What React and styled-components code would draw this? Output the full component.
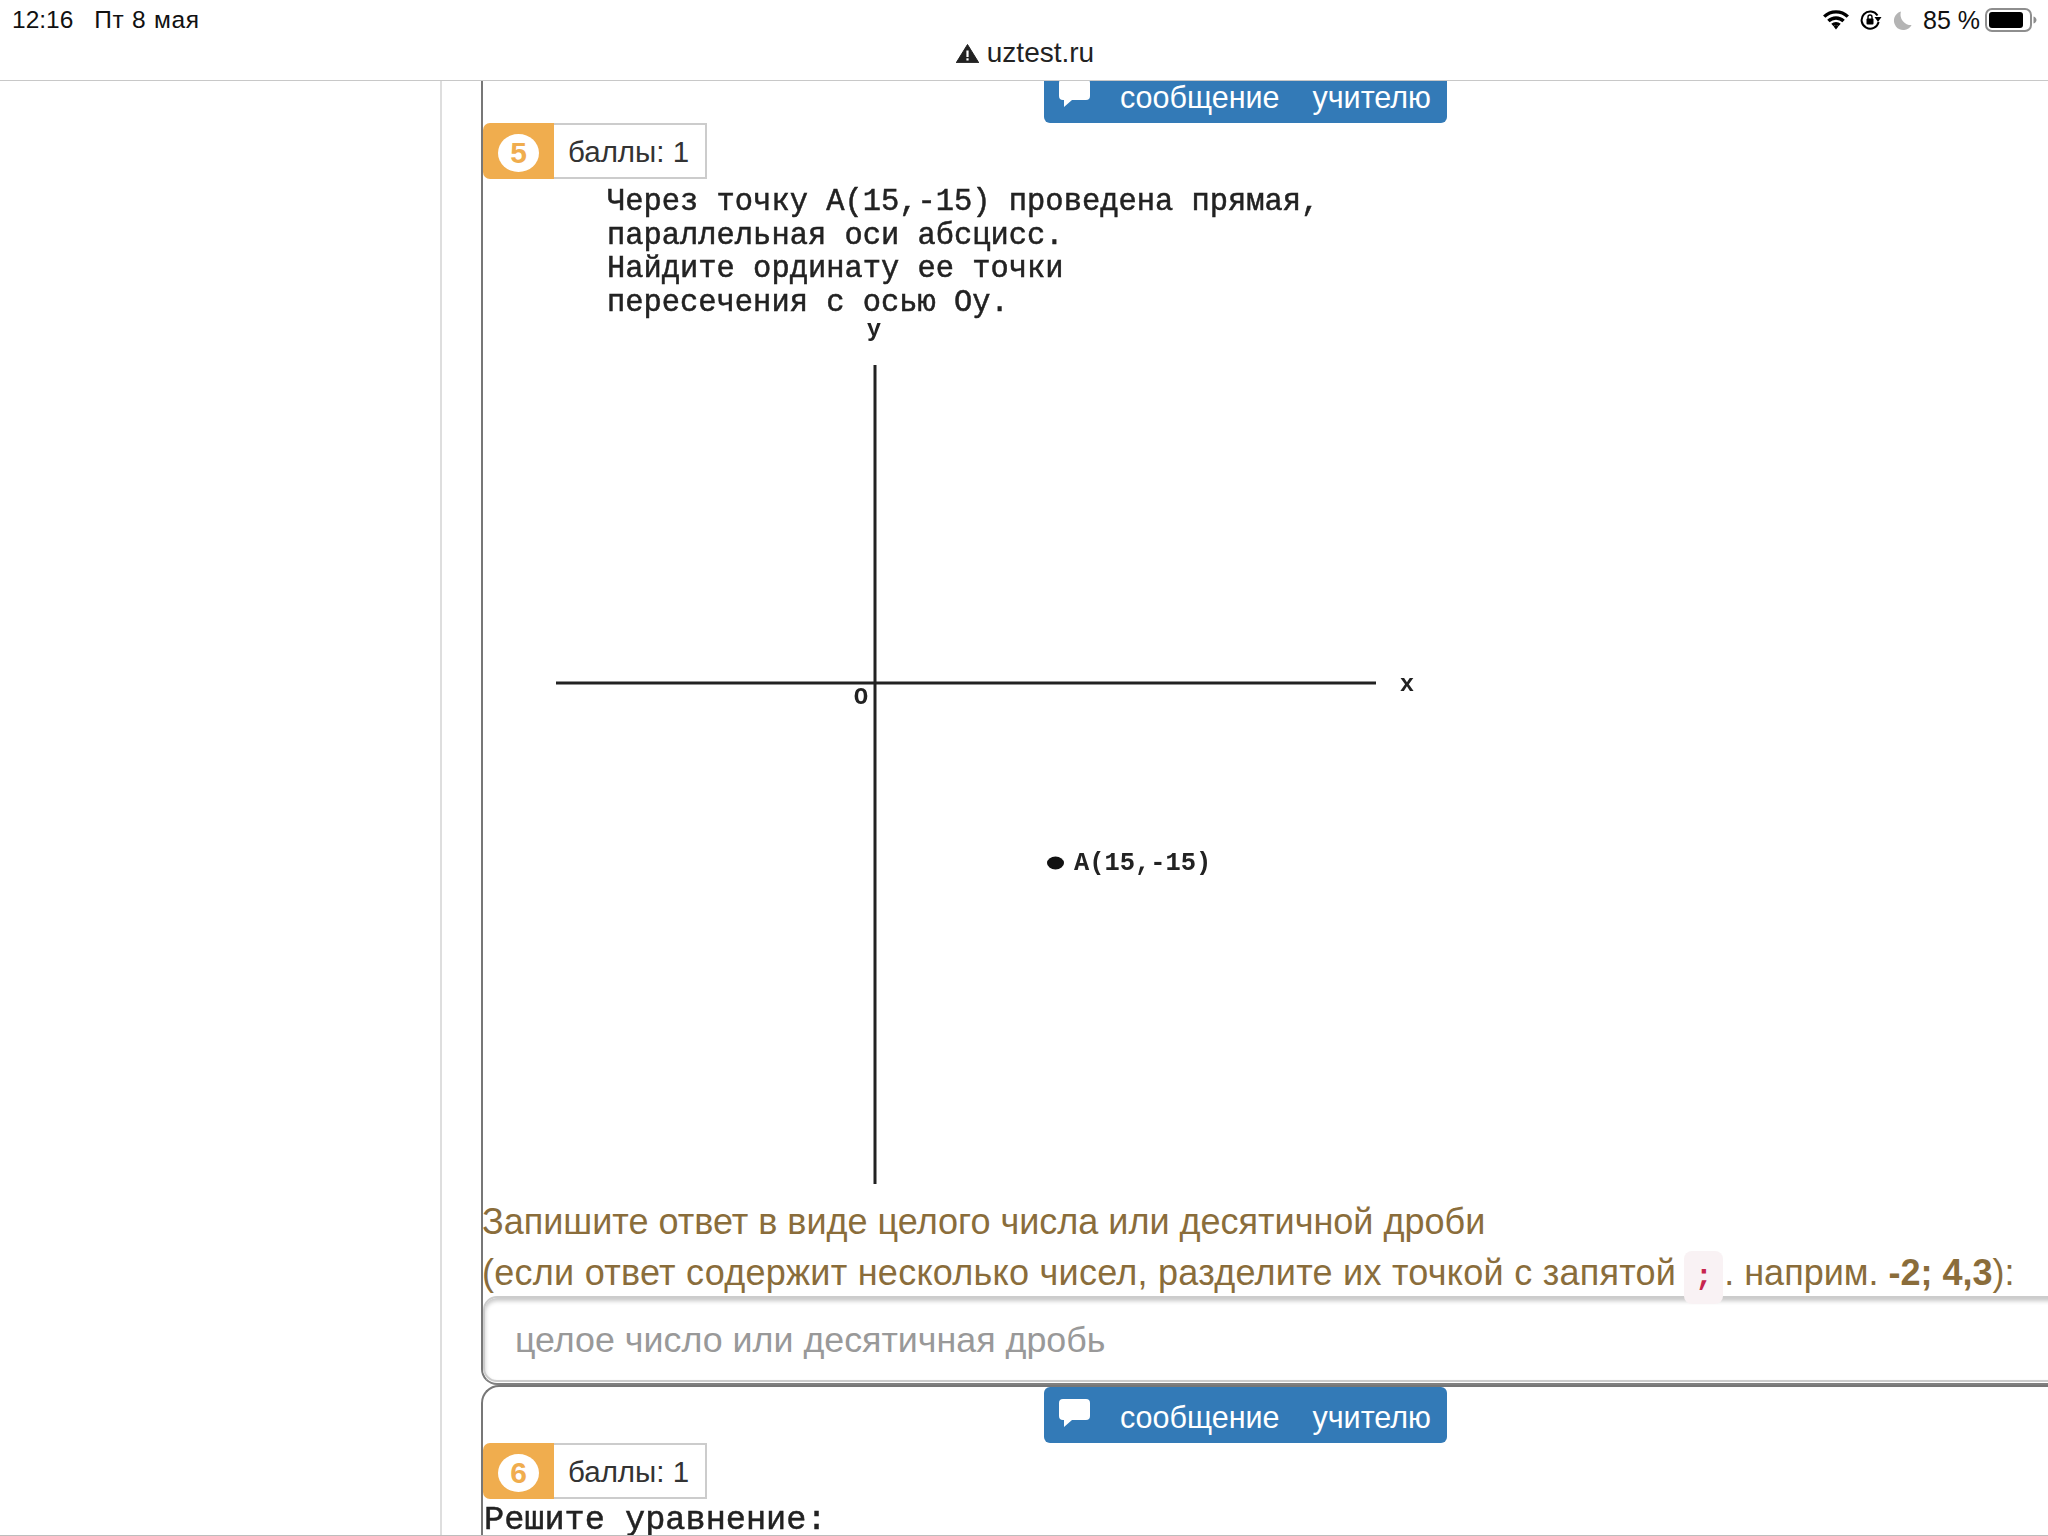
import React from 'react'
import styled, { createGlobalStyle } from 'styled-components'

const GlobalStyle = createGlobalStyle`
  html, body {
    margin: 0;
    padding: 0;
    background: #fff;
  }
  body {
    font-family: "Liberation Sans", Arial, sans-serif;
  }
`

const Page = styled.div`
  width: 2048px;
  height: 1536px;
  display: flex;
  flex-direction: column;
  overflow: hidden;
  box-sizing: border-box;
  border-bottom: 1px solid #bdbdbd;
`

const TopBar = styled.header`
  position: relative;
  z-index: 2;
  flex: none;
  height: 81px;
  box-sizing: border-box;
  background: #fff;
  border-bottom: 1px solid #c8c8c8;
  display: flex;
  flex-direction: column;
  color: #111;
`

const StatusRow = styled.div`
  height: 40px;
  padding: 0 11px 0 12px;
  display: flex;
  align-items: center;
  justify-content: space-between;
  font-size: 24.5px;
`

const StatusLeft = styled.div`
  display: flex;
  gap: 21px;
`

const DateText = styled.span`
  letter-spacing: 0.7px;
`

const StatusRight = styled.div`
  display: flex;
  align-items: center;
`

const Percent = styled.span`
  margin: 0 5px 0 11px;
  font-size: 25px;
`

const AddressRow = styled.div`
  height: 26px;
  display: flex;
  align-items: center;
  justify-content: center;
  gap: 8px;
  padding-left: 2px;
  font-size: 28px;
  color: #222;
`

const Main = styled.div`
  flex: 1;
  min-height: 0;
  display: flex;
`

const SideColumn = styled.aside`
  flex: none;
  width: 442px;
  box-sizing: border-box;
  border-right: 2px solid #dedede;
`

const Content = styled.main`
  flex: none;
  width: 1640px;
  margin-left: 39px;
`

const Card = styled.section`
  box-sizing: border-box;
  width: 100%;
  border-left: 2px solid #777;
  ${p => p.$first
    ? `margin-top: -14px;
       height: 1318px;
       border-bottom: 2px solid #808080;
       border-bottom-left-radius: 16px;`
    : `margin-top: 0;
       height: 150px;
       border-top: 2px solid #777;
       border-top-left-radius: 18px;`}
`

const MessageButton = styled.button`
  display: flex;
  align-items: center;
  width: 403px;
  height: 56px;
  margin: 0 0 0 561px;
  padding: 4px 0 0 15px;
  border: 0;
  border-radius: 6px;
  background: #337ab7;
  color: #fff;
  font: 30.5px "Liberation Sans", Arial, sans-serif;
  word-spacing: 2.5px;
  white-space: pre;
`

const BubbleIcon = styled.svg`
  width: 31px;
  height: 28px;
  margin: -8px 30px 0 0;
  fill: #fff;
`

const ScoreRow = styled.div`
  display: flex;
  height: 56px;
  width: 224px;
`

const ScoreNumber = styled.div`
  flex: none;
  width: 71px;
  display: flex;
  align-items: center;
  justify-content: center;
  background: #f0ad4e;
  border-radius: 7px 0 0 7px;
`

const ScoreCircle = styled.span`
  width: 41px;
  height: 38px;
  margin-top: 3px;
  border-radius: 50%;
  background: #fff;
  color: #f0ad4e;
  font-size: 30px;
  font-weight: 700;
  line-height: 38px;
  text-align: center;
`

const ScoreLabel = styled.div`
  flex: 1;
  box-sizing: border-box;
  border: 2px solid #ccc;
  border-left: 0;
  padding-left: 14px;
  font-size: 29.5px;
  line-height: 53px;
  color: #333;
`

const QuestionText = styled.pre`
  margin: 7px 0 0 124px;
  font: 30.45px/33.5px "Liberation Mono", "Courier New", monospace;
  color: #222;
  filter: blur(0.5px);
  -webkit-text-stroke: 0.5px #222;
`

const Graph = styled.svg`
  display: block;
  width: 1000px;
  height: 880px;
  margin-top: -3px;
  filter: blur(0.35px);
`

const GraphText = styled.text`
  font-family: "Liberation Mono", "Courier New", monospace;
  font-size: ${p => p.$size || 24}px;
  font-weight: ${p => (p.$bold ? 700 : 400)};
  fill: #222;
  text-anchor: ${p => p.$anchor || 'middle'};
`

const AnswerHint = styled.div`
  font-size: 36px;
  line-height: 51px;
  color: #8a6d3b;
  white-space: nowrap;
  margin: -1px 0 0 -1px;
`

const WideText = styled.span`
  letter-spacing: 0.26px;
`

const HintCode = styled.code`
  position: relative;
  z-index: 1;
  margin: 0 1px 0 8px;
  padding: 9px 10.5px 10px;
  font: 700 30px "Liberation Mono", monospace;
  color: #c7254e;
  background: #f9f2f4;
  border-radius: 8px;
`

const AnswerInput = styled.input`
  display: block;
  box-sizing: border-box;
  width: 1640px;
  height: 86px;
  margin-top: -2px;
  padding: 2px 30px 0;
  border: 2px solid #ccc;
  border-radius: 14px;
  outline: 0;
  background: #fff;
  box-shadow: inset 0 3px 4px rgba(0, 0, 0, 0.22);
  font: 35.8px "Liberation Sans", Arial, sans-serif;
  &::placeholder {
    color: #999;
    opacity: 1;
  }
`

const NextQuestion = styled.pre`
  margin: 6px 0 0 1px;
  font: 33.6px/30px "Liberation Mono", "Courier New", monospace;
  color: #222;
  filter: blur(0.5px);
  -webkit-text-stroke: 0.5px #222;
`

const Bubble = () => (
  <BubbleIcon viewBox="0 0 31 28">
    <path d="M4 0h23a4 4 0 0 1 4 4v13a4 4 0 0 1-4 4H13l-8 7v-7H4a4 4 0 0 1-4-4V4a4 4 0 0 1 4-4z" />
  </BubbleIcon>
)

const Message = () => (
  <MessageButton type="button">
    <Bubble />
    сообщение   учителю
  </MessageButton>
)

const Score = ({ n }) => (
  <ScoreRow>
    <ScoreNumber><ScoreCircle>{n}</ScoreCircle></ScoreNumber>
    <ScoreLabel>баллы: 1</ScoreLabel>
  </ScoreRow>
)

const WifiIcon = () => (
  <svg width="26" height="20" viewBox="0 0 26 20" fill="none" stroke="#000" strokeWidth="3.4">
    <path d="M1.2 6.600a17 17 0 0 1 23.600 0" />
    <path d="M5.400 11a11 11 0 0 1 15.200 0" />
    <path d="M9.400 15a5.400 5.400 0 0 1 7.200 0" />
    <path d="M10.600 16.400L13 19.600l2.400-3.200-2.400-1.600z" fill="#000" stroke="none" />
  </svg>
)

const RotationIcon = () => (
  <svg width="22" height="20" viewBox="0 0 22 20" fill="none" style={{ marginLeft: 11 }}>
    <path d="M17.500 5.500A8.600 8.600 0 1 0 18.600 12" stroke="#000" strokeWidth="2" />
    <path d="M14.500 7h7l-3.500 5z" fill="#000" />
    <rect x="6.500" y="8.500" width="7" height="6" rx="1" fill="#000" />
    <path d="M8 9V7a2 2 0 0 1 4 0v2" stroke="#000" strokeWidth="1.400" />
  </svg>
)

const MoonIcon = () => (
  <svg width="19" height="19" viewBox="0 0 19 19" style={{ marginLeft: 11 }}>
    <path d="M8 0.500a9.400 9.400 0 1 0 10.600 13.600A10.500 10.500 0 0 1 8 0.500z" fill="#b4b4b4" />
  </svg>
)

const BatteryIcon = () => (
  <svg width="52" height="24" viewBox="0 0 52 24">
    <rect x="1" y="1" width="45" height="22" rx="6" fill="none" stroke="#8e8e8e" strokeWidth="2" />
    <rect x="4" y="4" width="34" height="16" rx="3" fill="#000" />
    <path d="M48.500 8.500c2 .6 3 2 3 3.500s-1 2.900-3 3.500z" fill="#8e8e8e" />
  </svg>
)

const WarningIcon = () => (
  <svg width="23" height="19" viewBox="0 0 23 19">
    <path d="M11.500 0.500L22.800 18.800H0.200z" fill="#222" stroke="#222" strokeLinejoin="round" />
    <rect x="10.400" y="6.500" width="2.200" height="6.500" fill="#fff" />
    <rect x="10.400" y="14.300" width="2.200" height="2.200" fill="#fff" />
  </svg>
)

export default function App() {
  return (
    <>
      <GlobalStyle />
      <Page>
        <TopBar>
          <StatusRow>
            <StatusLeft>
              <span>12:16</span>
              <DateText>Пт 8 мая</DateText>
            </StatusLeft>
            <StatusRight>
              <WifiIcon />
              <RotationIcon />
              <MoonIcon />
              <Percent>85 %</Percent>
              <BatteryIcon />
            </StatusRight>
          </StatusRow>
          <AddressRow>
            <WarningIcon />
            <span>uztest.ru</span>
          </AddressRow>
        </TopBar>
        <Main>
          <SideColumn />
          <Content>
            <Card $first>
              <Message />
              <Score n={5} />
              <QuestionText>{`Через точку A(15,-15) проведена прямая,
параллельная оси абсцисс.
Найдите ординату ее точки
пересечения с осью Оу.`}</QuestionText>
              <Graph viewBox="0 0 1000 880">
                <GraphText x="391" y="19" $bold>y</GraphText>
                <line x1="392" y1="48" x2="392" y2="867" stroke="#222" strokeWidth="3" />
                <line x1="73" y1="366" x2="893" y2="366" stroke="#222" strokeWidth="3" />
                <GraphText x="924" y="374" $bold>x</GraphText>
                <GraphText x="378" y="387" $bold>O</GraphText>
                <ellipse cx="572.500" cy="546" rx="8.500" ry="6.500" fill="#111" />
                <GraphText x="591" y="553" $size={25.400} $anchor="start" $bold>A(15,-15)</GraphText>
              </Graph>
              <AnswerHint>
                Запишите ответ в виде целого числа или десятичной дроби
                <br />
                <WideText>(если ответ содержит несколько чисел, разделите их точкой с запятой</WideText>
                <HintCode>;</HintCode>. наприм. <b>-2; 4,3</b>):
              </AnswerHint>
              <AnswerInput placeholder="целое число или десятичная дробь" readOnly />
            </Card>
            <Card>
              <Message />
              <Score n={6} />
              <NextQuestion>Решите уравнение:</NextQuestion>
            </Card>
          </Content>
        </Main>
      </Page>
    </>
  )
}
